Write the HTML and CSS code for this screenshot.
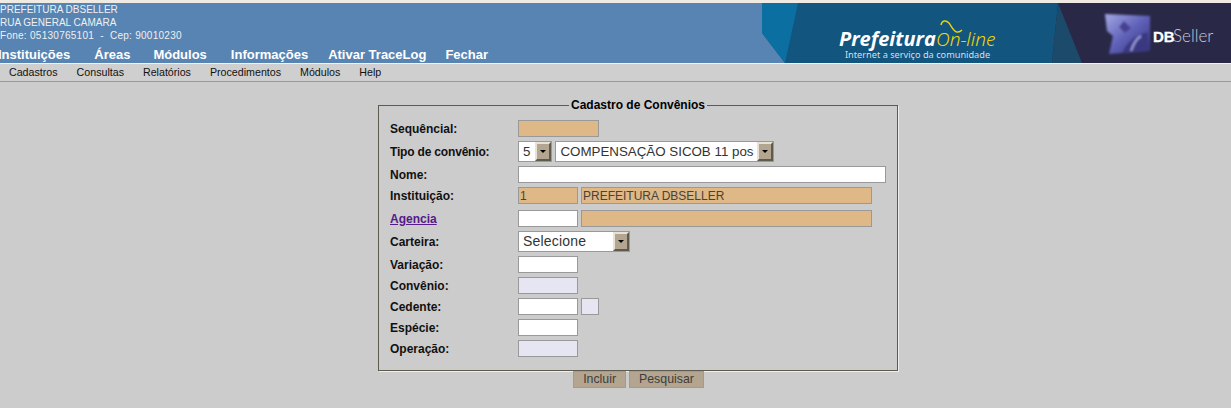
FILE: index.html
```html
<!DOCTYPE html>
<html lang="pt-BR">
<head>
    <meta charset="UTF-8">
    <title>Cadastro de Convênios</title>
    <link rel="stylesheet" href="styles.css">
</head>
<body>
    <header class="topo">
        <div class="topo-info">
            <div class="endereco">
                <div>PREFEITURA DBSELLER</div>
                <div>RUA GENERAL CAMARA</div>
                <div class="fone">Fone: 05130765101 &nbsp;-&nbsp; Cep: 90010230</div>
            </div>
            <nav class="nav-topo">
                <a>Instituições</a>
                <a class="nav-area">Áreas</a>
                <a>Módulos</a>
                <a class="nav-curto">Informações</a>
                <a class="nav-log">Ativar TraceLog</a>
                <a>Fechar</a>
            </nav>
        </div>
        <svg class="banner" width="469" height="60" viewBox="762 3 469 60">
            <defs>
                <linearGradient id="cubo" x1="0" y1="0" x2="1" y2="1">
                    <stop offset="0" stop-color="#a4a8e4"/>
                    <stop offset="0.5" stop-color="#5f61b8"/>
                    <stop offset="1" stop-color="#34337e"/>
                </linearGradient>
                <filter id="suave"><feGaussianBlur stdDeviation="0.8"/></filter>
            </defs>
            <rect x="1050" y="3" width="181" height="60" fill="#2a2847"/>
            <polygon points="762,3 1058,3 1052,63 785,63 762,33" fill="#12557f"/>
            <polygon points="762,3 798,3 785,63 762,33" fill="#0b6fa1"/>
            <polygon points="1058,3 1082,63 1052,63" fill="#1c4a6b"/>
            <text class="b-pref" x="839" y="46">Prefeitura</text>
            <text class="b-online" x="936" y="46">On-line</text>
            <path d="M941 25 C942 20 946 20 949 23 C952 27 954 33 958 32 C960 32 961 31 962 30" fill="none" stroke="#f2d500" stroke-width="1.4"/>
            <text class="b-tag" x="845" y="58">Internet a serviço da comunidade</text>
            <g filter="url(#suave)">
                <polygon points="1105,14 1150,16 1150,51 1109,54 1113,36 1107,31" fill="url(#cubo)"/>
                <polygon points="1119,27 1124,21 1131,28 1125,33" fill="#4a3f90"/>
                <path d="M1122 53 C1126 44 1134 35 1148 32 L1148 50 Z" fill="#3a3982"/>
                <path d="M1131 51 C1133 45 1137 38 1141 36" fill="none" stroke="#9ea0de" stroke-width="2"/>
            </g>
            <text class="b-db" x="1153" y="42">DB</text>
            <text class="b-seller" x="1173" y="42">Seller</text>
        </svg>
    </header>

    <nav class="menu">
        <a>Cadastros</a>
        <a>Consultas</a>
        <a>Relatórios</a>
        <a>Procedimentos</a>
        <a>Módulos</a>
        <a>Help</a>
    </nav>

    <form class="cadastro">
        <fieldset>
            <legend>Cadastro de Convênios</legend>

            <div class="linha">
                <label>Sequêncial:</label>
                <input class="campo bloqueado w-seq" type="text">
            </div>
            <div class="linha linha-select">
                <label class="rotulo-tipo">Tipo de convênio:</label>
                <span class="select">
                    <span class="select-texto w-num">5</span>
                    <span class="seta"></span>
                </span>
                <span class="select">
                    <span class="select-texto w-tipo">COMPENSAÇÃO SICOB 11 pos</span>
                    <span class="seta"></span>
                </span>
            </div>
            <div class="linha">
                <label>Nome:</label>
                <input class="campo w-nome" type="text">
            </div>
            <div class="linha">
                <label>Instituição:</label>
                <input class="campo bloqueado w-cod" type="text" value="1">
                <input class="campo bloqueado w-desc" type="text" value="PREFEITURA DBSELLER">
            </div>
            <div class="linha linha-agencia">
                <label><a href="#">Agencia</a></label>
                <input class="campo w-cod" type="text">
                <input class="campo bloqueado w-desc" type="text">
            </div>
            <div class="linha linha-select">
                <label>Carteira:</label>
                <span class="select">
                    <span class="select-texto w-carteira">Selecione</span>
                    <span class="seta"></span>
                </span>
            </div>
            <div class="linha">
                <label>Variação:</label>
                <input class="campo w-cod" type="text">
            </div>
            <div class="linha">
                <label>Convênio:</label>
                <input class="campo somente w-cod" type="text">
            </div>
            <div class="linha">
                <label>Cedente:</label>
                <input class="campo w-cod" type="text">
                <input class="campo somente w-dig" type="text">
            </div>
            <div class="linha">
                <label>Espécie:</label>
                <input class="campo w-cod" type="text">
            </div>
            <div class="linha">
                <label>Operação:</label>
                <input class="campo somente w-cod" type="text">
            </div>
        </fieldset>
        <div class="acoes">
            <button type="button">Incluir</button>
            <button type="button">Pesquisar</button>
        </div>
    </form>
</body>
</html>
```

FILE: styles.css
```css
html, body {
    margin: 0;
    padding: 0;
}

body {
    background-color: #cccccc;
    font-family: "Liberation Sans", Arial, sans-serif;
    border-top: 3px solid #efebe3;
    color: #000;
}

.topo {
    display: flex;
    justify-content: space-between;
    height: 60px;
    background-color: #5784b2;
    border-bottom: 1px solid #f2f2f2;
}

.topo-info {
    display: flex;
    flex-direction: column;
    color: #fff;
}

.endereco {
    height: 44px;
    font-size: 10px;
    line-height: 13px;
    color: #f0f0f0;
}

.fone {
    letter-spacing: 0.27px;
}

.nav-topo {
    display: flex;
    margin-left: -2px;
    font-size: 13px;
    font-weight: bold;
    line-height: 16px;
}

.nav-topo a {
    margin-right: 24px;
}

.nav-topo .nav-area {
    margin-right: 23px;
}

.nav-topo .nav-curto {
    margin-right: 20px;
}

.nav-topo .nav-log {
    margin-right: 19px;
}

.banner {
    display: block;
}

.b-pref {
    font-family: "Open Sans", sans-serif;
    font-size: 20px;
    font-weight: bold;
    font-style: italic;
    fill: #fff;
}

.b-online {
    font-family: "Noto Sans", sans-serif;
    font-size: 19px;
    font-style: italic;
    font-weight: 300;
    fill: #f2d500;
}

.b-tag {
    font-family: "Noto Sans", sans-serif;
    font-size: 9.2px;
    fill: #d5dfe8;
}

.b-db {
    font-family: "Liberation Sans", sans-serif;
    font-size: 15px;
    font-weight: bold;
    fill: #fff;
    stroke: #fff;
    stroke-width: 0.3;
}

.b-seller {
    font-family: "Lato", sans-serif;
    font-size: 17px;
    font-weight: 300;
    fill: #c9c9d6;
}

.menu {
    display: flex;
    gap: 19px;
    height: 17px;
    padding-left: 9px;
    background-color: #cfcfcf;
    border-bottom: 1px solid #999;
    font-size: 10.67px;
    line-height: 17px;
    color: #111;
}

.cadastro {
    width: 520px;
    margin: 16px 0 0 378px;
}

fieldset {
    box-sizing: border-box;
    margin: 0;
    padding: 8px 11px 13px;
    border: 1px solid #5f5a4e;
    box-shadow: 1px 1px 0 #eee;
    display: flex;
    flex-direction: column;
    gap: 4px;
}

legend {
    margin: 0 auto;
    padding: 0 2px;
    font-size: 12px;
    font-weight: bold;
    line-height: 14px;
}

.linha {
    display: flex;
    align-items: center;
    gap: 3px;
    height: 17px;
}

.linha-select {
    height: 21px;
}

.linha-agencia {
    margin-top: 2px;
}

.linha label {
    width: 128px;
    margin-right: -3px;
    font-size: 12px;
    font-weight: bold;
    color: #111;
}

.linha .rotulo-tipo {
    letter-spacing: -0.18px;
}

.linha label a {
    color: #551a8b;
}

.campo {
    box-sizing: border-box;
    height: 17px;
    margin: 0;
    padding: 0 1px;
    border: 1px solid #999;
    background-color: #fff;
    font-family: "Liberation Sans", Arial, sans-serif;
    font-size: 12px;
    color: #4a4237;
}

.bloqueado {
    background-color: #deb887;
}

.somente {
    background-color: #e6e6f2;
}

.w-seq { width: 81px; }
.w-nome { width: 368px; }
.w-cod { width: 60px; }
.w-desc { width: 291px; }
.w-dig { width: 18px; }

.select {
    display: flex;
    align-items: stretch;
    box-sizing: border-box;
    height: 21px;
    border: 1px solid #999;
    background-color: #fff;
}

.select-texto {
    padding: 0 4px;
    font-size: 13.33px;
    line-height: 19px;
    color: #333;
}

.w-num {
    padding-right: 5px;
}

.w-tipo {
    padding-right: 3px;
}

.w-carteira {
    width: 86px;
    font-size: 14px;
    letter-spacing: 0.2px;
}

.seta {
    position: relative;
    box-sizing: border-box;
    width: 16px;
    background-color: #b3a590;
    border: 2px solid;
    border-color: #e8e2d6 #5f5a4e #5f5a4e #e8e2d6;
}

.seta::after {
    content: "";
    position: absolute;
    top: 6px;
    left: 3px;
    border-style: solid;
    border-width: 3px 3px 0;
    border-color: #000 transparent transparent;
}

.acoes {
    display: flex;
    justify-content: center;
    gap: 3px;
    padding-left: 1px;
}

.acoes button {
    height: 17px;
    padding: 0 9px;
    border: 1px solid #a89a86;
    background-color: #b3a590;
    font-family: "Liberation Sans", Arial, sans-serif;
    font-size: 12.33px;
    line-height: 15px;
    color: #3d3d3d;
}
```
